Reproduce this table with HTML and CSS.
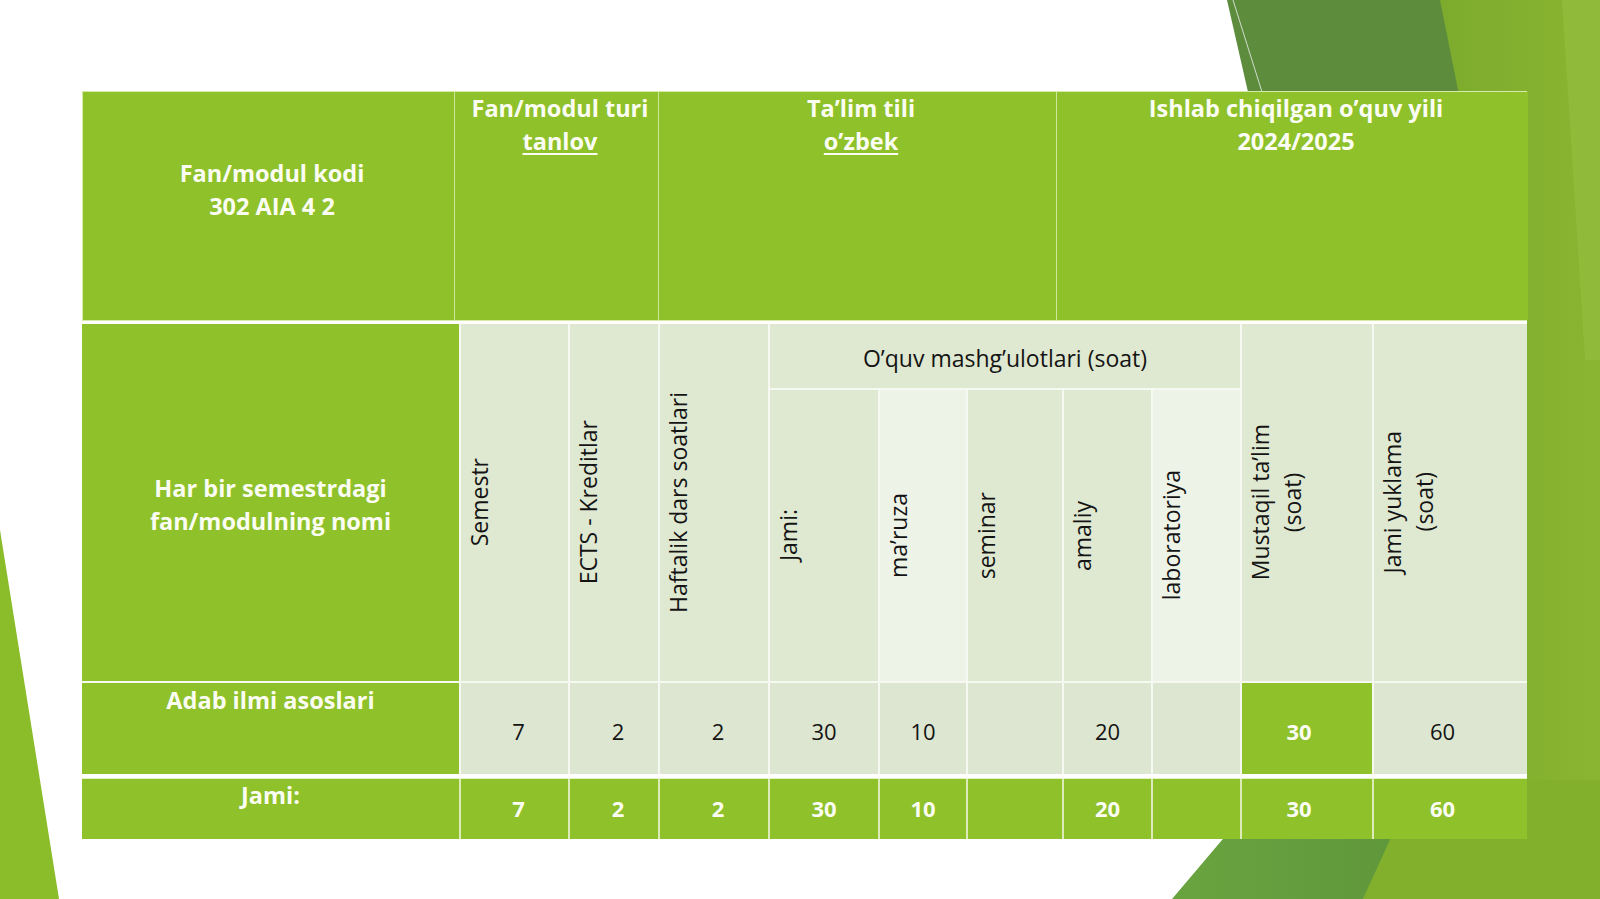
FILE: index.html
```html
<!DOCTYPE html>
<html lang="uz">
<head>
<meta charset="utf-8">
<title>Fan/modul</title>
<link rel="stylesheet" href="styles.css">
</head>
<body>
<div class="slide">
  <svg class="decor" width="1600" height="899" viewBox="0 0 1600 899" aria-hidden="true">
    <defs>
      <linearGradient id="rg" x1="0" y1="0" x2="1" y2="0">
        <stop offset="0" stop-color="#76a62a"/>
        <stop offset="1" stop-color="#8ab532"/>
      </linearGradient>
      <linearGradient id="bg" x1="0" y1="0" x2="1" y2="0">
        <stop offset="0" stop-color="#6aa43f"/>
        <stop offset="1" stop-color="#5e963b"/>
      </linearGradient>
    </defs>
    <polygon points="1437,0 1600,0 1600,899 1363,899 1470,420" fill="url(#rg)"/>
    <polygon points="1562,0 1600,0 1600,360 1585,360" fill="#8fba3a"/>
    <polygon points="1227,0 1440,0 1460,100 1480,320 1300,320" fill="#5c8c3c"/>
    <line x1="1233" y1="0" x2="1262" y2="92" stroke="#d4dccd" stroke-width="1"/>
    <polygon points="1172,899 1222,840 1280,780 1420,780 1390,840 1363,899" fill="url(#bg)"/>
    <polygon points="1363,899 1390,840 1420,780 1600,780 1600,899" fill="#82b02c"/>
    <polygon points="0,530 59,899 0,899" fill="#8bbd2b"/>
  </svg>

  <div class="table">
    <div class="top">
      <div class="hcell hcell-mid"><span>Fan/modul kodi<br>302 AIA 4 2</span></div>
      <div class="hcell"><span>Fan/modul turi<br><u>tanlov</u></span></div>
      <div class="hcell"><span>Ta’lim tili<br><u>o’zbek</u></span></div>
      <div class="hcell"><span>Ishlab chiqilgan o’quv yili<br>2024/2025</span></div>
    </div>

    <div class="mid">
      <div class="name-head"><span>Har bir semestrdagi<br>fan/modulning nomi</span></div>
      <div class="vh span2 c2"><span>Semestr</span></div>
      <div class="vh span2 c3"><span>ECTS - Kreditlar</span></div>
      <div class="vh span2 c4"><span>Haftalik dars soatlari</span></div>
      <div class="group-head">O’quv mashg’ulotlari (soat)</div>
      <div class="vh sub c5"><span>Jami:</span></div>
      <div class="vh sub lite c6"><span>ma’ruza</span></div>
      <div class="vh sub c7"><span>seminar</span></div>
      <div class="vh sub c8"><span>amaliy</span></div>
      <div class="vh sub lite c9"><span>laboratoriya</span></div>
      <div class="vh span2 c10"><span>Mustaqil ta’lim<br>(soat)</span></div>
      <div class="vh span2 c11"><span>Jami yuklama<br>(soat)</span></div>

      <div class="row-name">Adab ilmi asoslari</div>
      <div class="num shift-r">7</div>
      <div class="num shift-r">2</div>
      <div class="num shift-r">2</div>
      <div class="num">30</div>
      <div class="num">10</div>
      <div class="num"></div>
      <div class="num">20</div>
      <div class="num"></div>
      <div class="num num-green shift-l">30</div>
      <div class="num shift-l">60</div>
    </div>

    <div class="total">
      <div class="row-name">Jami:</div>
      <div class="tnum shift-r">7</div>
      <div class="tnum shift-r">2</div>
      <div class="tnum shift-r">2</div>
      <div class="tnum">30</div>
      <div class="tnum">10</div>
      <div class="tnum"></div>
      <div class="tnum">20</div>
      <div class="tnum"></div>
      <div class="tnum shift-l">30</div>
      <div class="tnum shift-l">60</div>
    </div>
  </div>
</div>
</body>
</html>
```

FILE: styles.css
```css
* { box-sizing: border-box; }

html, body {
  margin: 0;
  padding: 0;
  background: #ffffff;
}

body {
  font-family: "Open Sans", "Noto Sans", "DejaVu Sans", sans-serif;
}

.slide {
  position: relative;
  width: 1600px;
  height: 899px;
  overflow: hidden;
  background: #ffffff;
  padding: 91px 0 0 82px;
}

.decor {
  position: absolute;
  left: 0;
  top: 0;
}

.table {
  position: relative;
  z-index: 1;
  width: 1445px;
  background: #ffffff;
}

/* ---------- top header block ---------- */
.top {
  display: grid;
  grid-template-columns: 371px 203px 397px 471px;
  gap: 1px;
  height: 230px;
  background: #cfe79a;
  border: 1px solid #d6ebaa;
}

.hcell {
  background: #8fc12a;
  color: #fbfdf3;
  font-weight: 700;
  font-size: 23.5px;
  line-height: 32.6px;
  text-align: center;
  padding-top: 0;
  padding-left: 7px;
}

.hcell-mid {
  display: flex;
  align-items: center;
  justify-content: center;
  padding-bottom: 32px;
}

.hcell u {
  text-decoration-thickness: 2px;
  text-underline-offset: 3px;
}

/* ---------- middle block ---------- */
.mid {
  display: grid;
  margin-top: 3px;
  grid-template-columns: 377px 107px 88px 108px 108px 86px 94px 87px 87px 130px 153px;
  grid-template-rows: 64px 291px 91px;
  gap: 2px;
  background: #f6f9f1;
}

.name-head {
  grid-column: 1;
  grid-row: 1 / 3;
  background: #8fc12a;
  color: #fbfdf3;
  font-weight: 700;
  font-size: 23.5px;
  line-height: 32.6px;
  text-align: center;
  display: flex;
  align-items: center;
  justify-content: center;
  padding-top: 4px;
}

.vh {
  background: #dfe8d1;
  display: flex;
  align-items: center;
  justify-content: flex-start;
  padding-left: 2px;
  color: #141414;
  font-size: 23px;
  line-height: 32px;
}

.vh span {
  writing-mode: vertical-rl;
  transform: rotate(180deg);
  text-align: center;
  white-space: nowrap;
}

.span2 { grid-row: 1 / 3; }
.sub { grid-row: 2; }
.lite { background: #eef3e7; }

.c2 { grid-column: 2; }
.c3 { grid-column: 3; }
.c4 { grid-column: 4; }
.c5 { grid-column: 5; }
.c6 { grid-column: 6; }
.c7 { grid-column: 7; }
.c8 { grid-column: 8; }
.c9 { grid-column: 9; }
.c10 { grid-column: 10; }
.c11 { grid-column: 11; }

.group-head {
  grid-column: 5 / 10;
  grid-row: 1;
  background: #dfe8d1;
  color: #141414;
  font-size: 23px;
  display: flex;
  align-items: center;
  justify-content: center;
  padding-top: 4px;
}

.row-name {
  background: #8fc12a;
  color: #fbfdf3;
  font-weight: 700;
  font-size: 23.5px;
  line-height: 32.6px;
  text-align: center;
  padding-top: 1px;
}

.num {
  background: #dde6d0;
  color: #141414;
  font-size: 22px;
  display: flex;
  align-items: center;
  justify-content: center;
  padding-top: 4px;
}

.num-green {
  background: #8fc12a;
  color: #fbfdf3;
  font-weight: 700;
}

.shift-r { padding-left: 8px; }
.shift-l { padding-right: 16px; }

/* ---------- total row ---------- */
.total {
  display: grid;
  margin-top: 4px;
  grid-template-columns: 377px 107px 88px 108px 108px 86px 94px 87px 87px 130px 153px;
  grid-template-rows: 60px;
  gap: 2px;
  background: #dcebb8;
  border-top: 1px solid #e4f0c8;
  border-right: 1px solid #e4f0c8;
}

.total .row-name {
  padding-top: 0;
}

.tnum {
  background: #8fc12a;
  color: #fbfdf3;
  font-weight: 700;
  font-size: 22px;
  display: flex;
  align-items: center;
  justify-content: center;
  padding-bottom: 2px;
}
```
